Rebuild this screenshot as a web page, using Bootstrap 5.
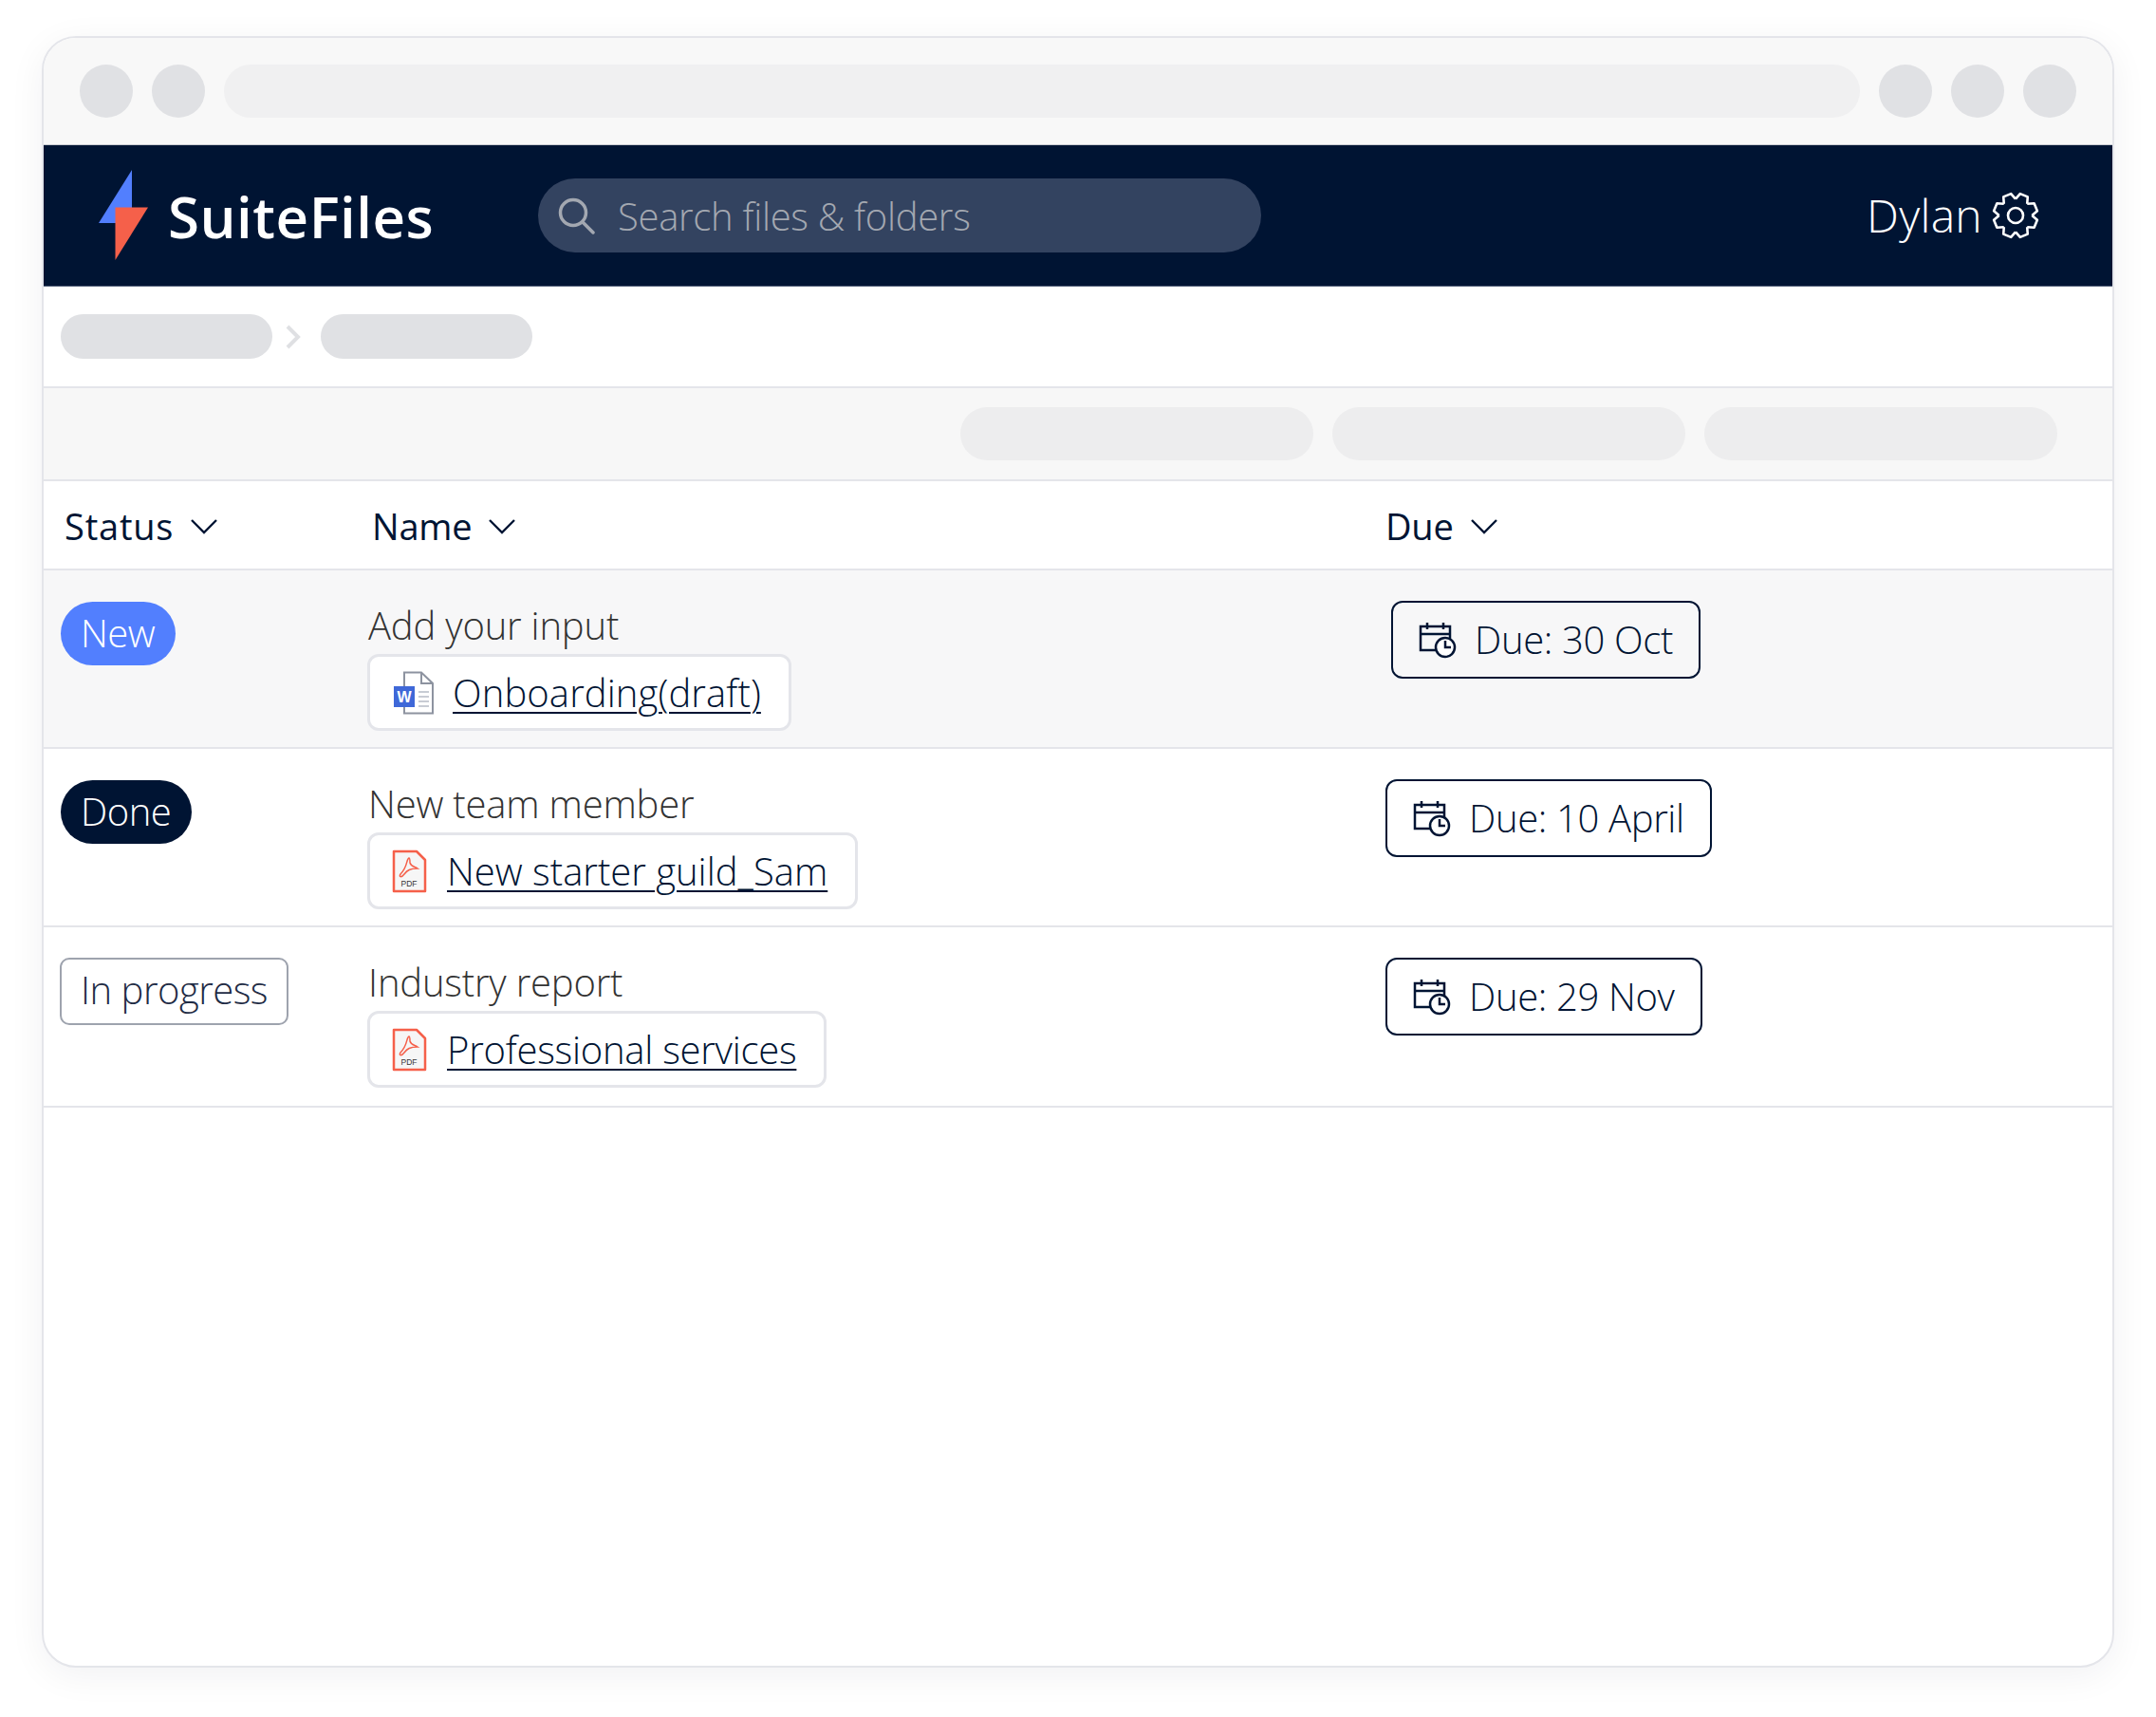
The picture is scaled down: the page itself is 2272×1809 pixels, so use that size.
<!doctype html>
<html lang="en">
<head>
<meta charset="utf-8">
<title>SuiteFiles</title>
<link rel="stylesheet" href="https://cdn.jsdelivr.net/npm/bootstrap@5.3.0/dist/css/bootstrap.min.css">
<style>
:root{--ink:#001433;--line:#e4e5ea;--sk:#e0e1e4;}
body{background:#fff;font-family:"Open Sans","Noto Sans",sans-serif;color:var(--ink);margin:0;min-height:1809px;}
.app-window{margin:38px 0 0 44px;width:2184px;height:1719px;background:#fff;border:2px solid var(--line);border-radius:36px;overflow:hidden;box-shadow:0 8px 38px rgba(0,20,51,.06);}
.chrome-bar{height:113px;background:#f8f8f8;padding:28px 38px 0 38px;border-bottom:1px solid #c9cbd1;}
.chrome-dot{width:56px;height:56px;border-radius:50%;background:var(--sk);flex:none;}
.chrome-dot+.chrome-dot{margin-left:20px;}
.chrome-url{height:56px;border-radius:28px;background:#f0f0f1;flex:1;margin:0 20px 0 20px;}
.chrome-right{gap:20px;}
.chrome-right .chrome-dot+.chrome-dot{margin-left:0;}
.top-nav{height:149px;background:var(--ink);padding:0;border-bottom:1px solid #55617a;}
.logo-mark{width:54px;height:96px;margin-left:58px;margin-top:0;flex:none;}
.logo-text{font-size:60px;font-weight:600;color:#fff;line-height:1;margin-left:19px;letter-spacing:.5px;width:297px;padding-top:2px;}
.search-box{width:762px;height:78px;border-radius:39px;background:#334360;margin-left:93px;padding-left:21px;gap:24px;}
.search-text{font-size:40px;font-weight:300;color:#a3a8b1;letter-spacing:-.3px;line-height:1;padding-top:1px;}
.user-box{margin-left:auto;padding-right:77px;color:#fff;gap:10px;}
.user-name{font-size:48px;font-weight:300;line-height:1;letter-spacing:.3px;}
.crumb-row{height:107px;padding-left:18px;border-bottom:2px solid var(--line);}
.crumb-pill{width:223px;height:47px;border-radius:24px;background:var(--sk);}
.crumb-sep{width:51px;padding-right:8px;}
.tool-row{height:98px;background:#f7f7f7;border-bottom:2px solid var(--line);padding-right:58px;gap:20px;}
.tool-pill{width:372px;height:56px;border-radius:28px;background:#ededee;}
.task-table{--bs-table-bg:transparent;--bs-table-border-color:var(--line);table-layout:fixed;width:100%;margin:0;color:var(--ink);}
.task-table th,.task-table td{border-bottom:2px solid var(--line);padding:0;vertical-align:top;}
.col-status{width:341px;}
.col-name{width:1073px;}
.task-table thead th{height:93px;vertical-align:middle;font-size:38px;font-weight:500;letter-spacing:-.2px;}
.head-cell{gap:18px;padding-top:3px;}
.head-status{padding-left:22px;letter-spacing:.8px;}
.head-name{padding-left:5px;}
.head-due{padding-left:0;}
.task-row td{height:188px;}
.task-row.is-last td{height:190px;}
.task-row.is-new td{background:#f7f7f8;}
.state-pill{font-size:40px;font-weight:300;line-height:1;padding:13px 22px 14px 21px;margin:33px 0 0 18px;letter-spacing:-.5px;display:inline-block;}
.state-new{background:#527ffe;color:#fff;border-radius:34px;}
.state-done{background:var(--ink);color:#fff;border-radius:34px;}
.state-progress{background:#fff;color:#1f2c45;border:2px solid #9ea3ae;border-radius:10px;margin:32px 0 0 17px;padding:12px 20px 15px;}
.task-title{font-size:40px;font-weight:300;color:#333;line-height:1;padding-top:38px;margin-left:1px;letter-spacing:-.2px;height:88px;}
.file-chip{height:81px;border:3px solid var(--line);border-radius:12px;background:#fff;padding-right:29px;}
.chip-word{padding-left:25px;gap:20px;}
.chip-pdf{padding-left:22px;gap:21px;}
.file-link{font-size:40px;font-weight:300;color:var(--ink);line-height:1;text-decoration:underline;text-decoration-thickness:2px;text-underline-offset:5px;letter-spacing:-.1px;}
.link-wide{letter-spacing:.1px;}
.link-mid{letter-spacing:0;}
.link-tight{letter-spacing:-.25px;}
.due-btn{height:82px;border:2px solid var(--ink);border-radius:12px;background:#fff;color:var(--ink);font-size:40px;font-weight:300;line-height:1;margin-top:32px;padding:0 27px 0 27px;gap:19px;letter-spacing:-.35px;}
.due-btn:hover{background:#fff;color:var(--ink);border-color:var(--ink);}
.due-shift{margin-left:6px;}
.due-trans{background:transparent;}
</style>
</head>
<body>
<div class="app-window">
  <div class="chrome-bar d-flex align-items-start">
    <div class="chrome-dot"></div><div class="chrome-dot"></div>
    <div class="chrome-url"></div>
    <div class="chrome-right d-flex"><div class="chrome-dot"></div><div class="chrome-dot"></div><div class="chrome-dot"></div></div>
  </div>

  <nav class="navbar top-nav flex-nowrap">
    <svg class="logo-mark" viewBox="0 0 54 96" aria-label="SuiteFiles logo">
      <polygon points="35,0 0,56 35,56" fill="#527ffe"/>
      <polygon points="17.500,39.500 52,39.500 17.500,95" fill="#f5604a"/>
    </svg>
    <span class="logo-text">SuiteFiles</span>
    <div class="search-box d-flex align-items-center">
      <svg width="39" height="39" viewBox="0 0 39 39" fill="none" stroke="#a3a8b1" stroke-width="3.500"><circle cx="16" cy="16" r="13.500"/><path d="M26 26 37 37" stroke-linecap="round"/></svg>
      <span class="search-text">Search files &amp; folders</span>
    </div>
    <div class="user-box d-flex align-items-center">
      <span class="user-name">Dylan</span>
      <svg width="50" height="50" viewBox="-25 -25 50 50" fill="none" stroke="#fff" stroke-width="2.600" stroke-linejoin="round">
        <defs><polyline id="gear-tooth" points="-6.600,-16 -4.300,-23 4.300,-23 6.600,-16"/></defs>
        <use href="#gear-tooth" transform="rotate(22.500)"/><use href="#gear-tooth" transform="rotate(67.500)"/>
        <use href="#gear-tooth" transform="rotate(112.500)"/><use href="#gear-tooth" transform="rotate(157.500)"/>
        <use href="#gear-tooth" transform="rotate(202.500)"/><use href="#gear-tooth" transform="rotate(247.500)"/>
        <use href="#gear-tooth" transform="rotate(292.500)"/><use href="#gear-tooth" transform="rotate(337.500)"/>
        <circle r="8"/>
      </svg>
    </div>
  </nav>

  <div class="crumb-row d-flex align-items-center">
    <div class="crumb-pill"></div>
    <div class="crumb-sep d-flex justify-content-center"><svg width="16" height="26" viewBox="0 0 16 26" fill="none" stroke="#dfe0e3" stroke-width="4"><path d="M2 2 13 13 2 24"/></svg></div>
    <div class="crumb-pill"></div>
  </div>

  <div class="tool-row d-flex align-items-center justify-content-end">
    <div class="tool-pill"></div><div class="tool-pill"></div><div class="tool-pill"></div>
  </div>

  <table class="table task-table">
    <colgroup><col class="col-status"><col class="col-name"><col></colgroup>
    <thead>
      <tr>
        <th><div class="d-flex align-items-center head-cell head-status">Status <svg width="28" height="16" viewBox="0 0 28 16" fill="none" stroke="#001433" stroke-width="2.400"><path d="M1 1 14 14 27 1"/></svg></div></th>
        <th><div class="d-flex align-items-center head-cell head-name">Name <svg width="28" height="16" viewBox="0 0 28 16" fill="none" stroke="#001433" stroke-width="2.400"><path d="M1 1 14 14 27 1"/></svg></div></th>
        <th><div class="d-flex align-items-center head-cell head-due">Due <svg width="28" height="16" viewBox="0 0 28 16" fill="none" stroke="#001433" stroke-width="2.400"><path d="M1 1 14 14 27 1"/></svg></div></th>
      </tr>
    </thead>
    <tbody>
      <tr class="task-row is-new">
        <td><span class="state-pill state-new">New</span></td>
        <td>
          <div class="task-title">Add your input</div>
          <div class="file-chip chip-word d-inline-flex align-items-center">
            <svg width="42" height="46" viewBox="0 0 42 46">
              <path d="M11 1.500H29L41 13V44.500H11Z" fill="#fff" stroke="#8d93a0" stroke-width="2"/>
              <path d="M29 1.500V13H41" fill="none" stroke="#8d93a0" stroke-width="2"/>
              <path d="M26 22H37M26 27H37M26 32H37M26 37H37" stroke="#c8ccd4" stroke-width="2"/>
              <rect x="0" y="16" width="22" height="22" fill="#3f68d8"/>
              <text x="11" y="33" text-anchor="middle" font-family="Liberation Sans" font-size="16" font-weight="700" fill="#fff">W</text>
            </svg>
            <a class="file-link link-wide" href="#">Onboarding(draft)</a>
          </div>
        </td>
        <td><a class="btn due-btn due-shift due-trans d-inline-flex align-items-center" href="#">
          <svg width="40" height="40" viewBox="0 0 40 40" fill="none" stroke="#001433" stroke-width="2.500"><path d="M19 31H2V6H33V20M2 14H33M9 2V9M26 2V9"/><circle cx="28" cy="28" r="10" fill="#fff"/><path d="M28 21V28H34"/></svg>
          Due: 30 Oct</a></td>
      </tr>
      <tr class="task-row">
        <td><span class="state-pill state-done">Done</span></td>
        <td>
          <div class="task-title">New team member</div>
          <div class="file-chip chip-pdf d-inline-flex align-items-center">
            <svg width="38" height="46" viewBox="0 0 38 46">
              <path d="M3 2H27L36 11V44H3Z" fill="#f6f6f6" stroke="#f5604a" stroke-width="2.500" stroke-linejoin="round"/>
              <path d="M19 9C16 10 18 18 10 26 8 29 11 30 14 26 17 22 20 20 28 20 25 18 21 18 20 14 20 11 20 9 19 9Z" fill="none" stroke="#f5604a" stroke-width="1.500"/>
              <text x="19" y="39" text-anchor="middle" font-family="Liberation Sans" font-size="8.500" fill="#333">PDF</text>
            </svg>
            <a class="file-link link-mid" href="#">New starter guild_Sam</a>
          </div>
        </td>
        <td><a class="btn due-btn d-inline-flex align-items-center" href="#">
          <svg width="40" height="40" viewBox="0 0 40 40" fill="none" stroke="#001433" stroke-width="2.500"><path d="M19 31H2V6H33V20M2 14H33M9 2V9M26 2V9"/><circle cx="28" cy="28" r="10" fill="#fff"/><path d="M28 21V28H34"/></svg>
          Due: 10 April</a></td>
      </tr>
      <tr class="task-row is-last">
        <td><span class="state-pill state-progress">In progress</span></td>
        <td>
          <div class="task-title">Industry report</div>
          <div class="file-chip chip-pdf d-inline-flex align-items-center">
            <svg width="38" height="46" viewBox="0 0 38 46">
              <path d="M3 2H27L36 11V44H3Z" fill="#f6f6f6" stroke="#f5604a" stroke-width="2.500" stroke-linejoin="round"/>
              <path d="M19 9C16 10 18 18 10 26 8 29 11 30 14 26 17 22 20 20 28 20 25 18 21 18 20 14 20 11 20 9 19 9Z" fill="none" stroke="#f5604a" stroke-width="1.500"/>
              <text x="19" y="39" text-anchor="middle" font-family="Liberation Sans" font-size="8.500" fill="#333">PDF</text>
            </svg>
            <a class="file-link link-tight" href="#">Professional services</a>
          </div>
        </td>
        <td><a class="btn due-btn d-inline-flex align-items-center" href="#">
          <svg width="40" height="40" viewBox="0 0 40 40" fill="none" stroke="#001433" stroke-width="2.500"><path d="M19 31H2V6H33V20M2 14H33M9 2V9M26 2V9"/><circle cx="28" cy="28" r="10" fill="#fff"/><path d="M28 21V28H34"/></svg>
          Due: 29 Nov</a></td>
      </tr>
    </tbody>
  </table>
</div>
<script src="https://cdn.jsdelivr.net/npm/bootstrap@5.3.0/dist/js/bootstrap.bundle.min.js"></script>
</body>
</html>
